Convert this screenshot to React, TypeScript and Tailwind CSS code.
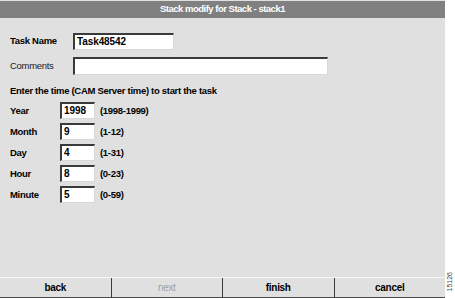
const FONT = { fontFamily: '"Liberation Sans", Arial, sans-serif' };

const TIME_FIELDS = [
  { label: "Year", value: "1998", range: "(1998-1999)" },
  { label: "Month", value: "9", range: "(1-12)" },
  { label: "Day", value: "4", range: "(1-31)" },
  { label: "Hour", value: "8", range: "(0-23)" },
  { label: "Minute", value: "5", range: "(0-59)" },
];

const BUTTONS = [
  { label: "back", disabled: false },
  { label: "next", disabled: true },
  { label: "finish", disabled: false },
  { label: "cancel", disabled: false },
];

function Box({ value, className }: { value: string; className: string }) {
  return (
    <div
      className={`box-border flex items-center border-t-2 border-l-2 border-t-[#3a3a3a] border-l-[#3a3a3a] border-r border-b border-r-[#d8d8d8] border-b-[#d8d8d8] bg-white pb-[2px] pl-[2px] text-[10px] font-bold tracking-[-0.1px] text-black ${className}`}
    >
      {value}
    </div>
  );
}

export default function App() {
  return (
    <div className="flex h-[298px] w-[455px] bg-white" style={FONT}>
      <div className="flex w-[445px] flex-col bg-[#e0e0e0]">
        <div className="mt-px flex h-[17px] items-center justify-center bg-[#808080] text-[9.5px] font-bold tracking-[-0.5px] text-white">
          Stack modify for Stack - stack1
        </div>

        <div className="flex flex-1 flex-col pl-[10px] text-[9.5px] tracking-[-0.3px] text-black">
          <div className="mt-[15px] flex h-[17px] items-center">
            <span className="w-[63px] font-bold">Task Name</span>
            <Box value="Task48542" className="h-[17px] w-[101px]" />
          </div>
          <div className="mt-[7px] flex h-[18px] items-center">
            <span className="w-[63px] text-[#1a1a1a]">Comments</span>
            <Box value="" className="h-[18px] w-[255px]" />
          </div>
          <div className="mt-[9px] font-bold">Enter the time (CAM Server time) to start the task</div>
          <div className="mt-[4px] flex flex-col gap-[4px]">
            {TIME_FIELDS.map((f) => (
              <div key={f.label} className="flex h-[17px] items-center">
                <span className="w-[50px] font-bold">{f.label}</span>
                <Box value={f.value} className="h-[17px] w-[35px]" />
                <span className="ml-[5px] font-bold">{f.range}</span>
              </div>
            ))}
          </div>
        </div>

        <div className="flex h-[21px] border-t border-b border-t-[#f6f6f6] border-b-[#4a4a4a]">
          {BUTTONS.map((b, i) => (
            <div
              key={b.label}
              className={`flex flex-1 items-center justify-center text-[10px] tracking-[-0.3px] ${
                i < BUTTONS.length - 1 ? "border-r border-r-[#3c3c3c]" : ""
              } ${b.disabled ? "font-normal text-[#a0a0a0]" : "font-bold text-black"}`}
            >
              {b.label}
            </div>
          ))}
        </div>
      </div>
      <div className="flex w-[10px] flex-col justify-end pb-[7px]">
        <span className="rotate-180 text-[7px] leading-[10px] text-[#444] [writing-mode:vertical-rl]">15126</span>
      </div>
    </div>
  );
}
